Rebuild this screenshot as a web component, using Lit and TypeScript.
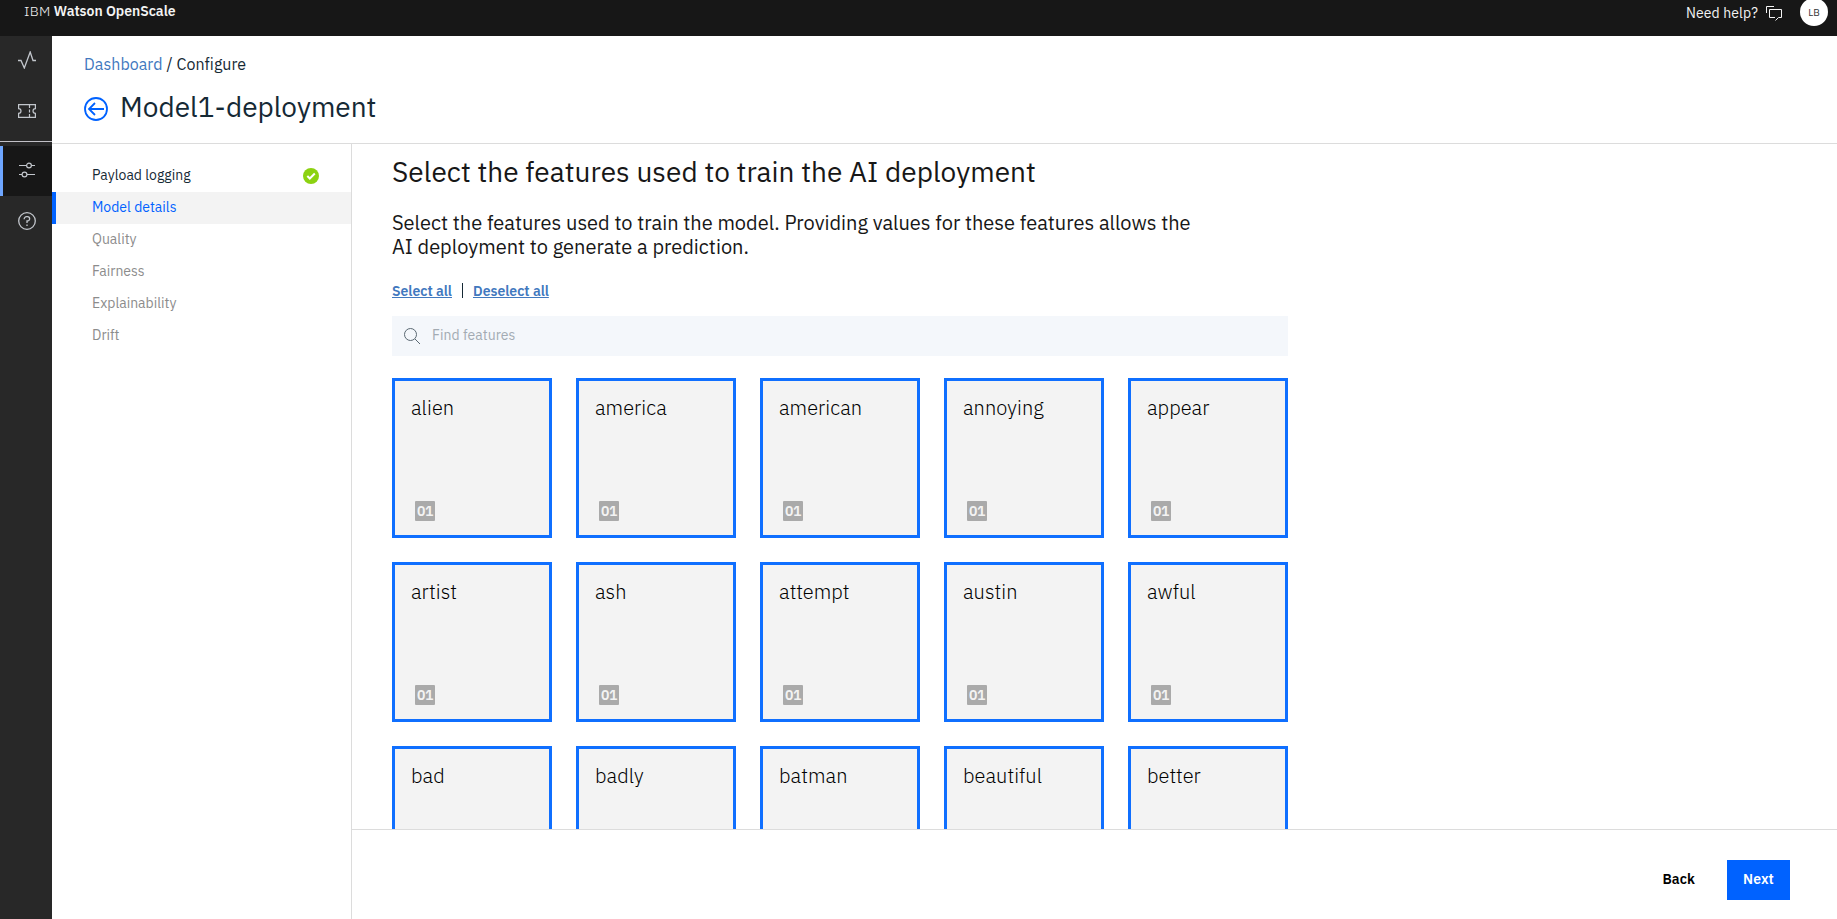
import { LitElement, html, css } from "lit";
import { customElement } from "lit/decorators.js";

const FEATURES = [
  { name: "alien", type: "01" }, { name: "america", type: "01" }, { name: "american", type: "01" }, { name: "annoying", type: "01" }, { name: "appear", type: "01" },
  { name: "artist", type: "01" }, { name: "ash", type: "01" }, { name: "attempt", type: "01" }, { name: "austin", type: "01" }, { name: "awful", type: "01" },
  { name: "bad" }, { name: "badly" }, { name: "batman" }, { name: "beautiful" }, { name: "better" },
];

@customElement("app-root")
export class AppRoot extends LitElement {
  static styles = css`
    :host { display: flex; flex-direction: column; height: 100vh; overflow: hidden; background: #fff; color: #171717; font-family: "IBM Plex Sans", Roboto, "Open Sans", sans-serif; }
    * { box-sizing: border-box; }
    svg { display: block; fill: none; }
    a { color: inherit; }
    h1, h2, p { margin: 0; font-weight: 400; }
    .top { height: 36px; flex: none; background: #171717; color: #f3f3f3; display: flex; justify-content: space-between; padding: 0 9px 0 24px; }
    .brand { font-size: 14px; line-height: 22px; white-space: pre; }
    .ibm { font-weight: 300; letter-spacing: 0.25px; }
    .product { font-weight: 600; letter-spacing: -0.03px; }
    .tools { display: flex; height: 26px; align-items: center; font-size: 14px; }
    .help { letter-spacing: 0.1px; margin-right: 8px; }
    .tools svg { margin-top: 1px; }
    .avatar { width: 28px; height: 28px; border-radius: 50%; background: #fff; color: #333; font-size: 10px; display: grid; place-items: center; margin: -2px 0 0 17px; }
    .body { flex: 1; min-height: 0; display: flex; }
    .rail { width: 52px; flex: none; background: #282828; color: #c2c6cc; display: flex; flex-direction: column; }
    .rail-item { height: 50px; margin-bottom: 1px; display: flex; align-items: center; padding: 0 0 2px 18px; }
    .rail-item.last { border-left: 3px solid #6ea6ff; padding-left: 15px; background: #171717; }
    .rail hr { width: 100%; height: 1px; flex: none; border: 0; background: #c2c1c7; margin: 3px 0 4px; }
    .page { flex: 1; min-width: 0; display: flex; flex-direction: column; }
    .head { height: 108px; flex: none; border-bottom: 1px solid #dcdcdc; padding: 17px 32px 0; color: #152935; }
    .crumbs { font-size: 16px; line-height: 22px; white-space: pre; letter-spacing: 0.06px; }
    .crumbs a { color: #4178be; text-decoration: none; }
    .title { display: flex; align-items: center; margin-top: 14px; gap: 12px; }
    .title svg { margin-top: 3px; }
    .title h1 { font-size: 28px; line-height: 36px; }
    .cols { flex: 1; min-height: 0; display: flex; }
    .steps { width: 300px; flex: none; border-right: 1px solid #dcdcdc; padding-top: 16px; font-size: 14px; }
    .step { height: 32px; display: flex; align-items: center; justify-content: space-between; padding: 0 32px 2px 40px; color: #8c8c8c; }
    .step svg { margin-top: 2px; }
    .step.done { color: #152935; }
    .step.now { color: #0062ff; background: #f3f3f3; border-left: 4px solid #0062ff; padding-left: 36px; }
    .work { flex: 1; min-width: 0; display: flex; flex-direction: column; }
    .scroll { flex: 1; min-height: 0; overflow: hidden; padding: 10px 0 0 40px; }
    .scroll h2 { font-size: 28px; line-height: 36px; letter-spacing: 0.04px; }
    .lead { font-size: 20px; line-height: 24px; margin-top: 21px; }
    .links { display: flex; font-size: 14px; line-height: 20px; margin-top: 22px; color: #4178be; font-weight: 600; }
    .links a { text-decoration: underline; text-underline-offset: 1px; }
    .sep { width: 1px; height: 15px; margin: 2px 10px 0; background: #152935; }
    .search { width: 896px; height: 40px; margin-top: 15px; background: #f4f7fb; display: flex; align-items: center; gap: 12px; padding-left: 12px; font-size: 14px; color: #a3abb3; }
    .search span { padding-bottom: 2px; letter-spacing: 0.05px; }
    .grid { display: grid; grid-template-columns: repeat(5, 160px); gap: 24px; margin-top: 22px; }
    .card { height: 160px; border: 3px solid #0f6fff; background: #f3f3f3; padding: 14px 16px; display: flex; flex-direction: column; justify-content: space-between; font-size: 20px; line-height: 26px; font-weight: 300; color: #000; letter-spacing: 0.06px; }
    .type { width: 20px; height: 20px; border-radius: 1px; background: #aaa; color: #f3f3f3; font-size: 14px; line-height: 20px; font-weight: 600; text-align: center; letter-spacing: -0.3px; margin-left: 4px; }
    .foot { height: 90px; flex: none; border-top: 1px solid #dcdcdc; display: flex; justify-content: flex-end; padding: 30px 47px 0 0; font-size: 14px; font-weight: 600; }
    .foot span { height: 40px; line-height: 38px; }
    .back { color: #000; margin-right: 32px; letter-spacing: 0.1px; }
    .next { width: 63px; text-align: center; background: #0062ff; color: #fff; letter-spacing: 0.1px; }
  `;

  render() {
    return html`
      <header class="top">
        <div class="brand"><span class="ibm">IBM</span> <span class="product">Watson OpenScale</span></div>
        <div class="tools"><span class="help">Need help?</span>
          <svg width="17" height="15" viewBox="0 0 17 15" stroke="#f3f3f3"><path d="M.5 7V.5H8M3.5 3.5h12v8h-3l-3 3M9 11.500H3.500v-8"/></svg>
          <span class="avatar">LB</span></div>
      </header>
      <div class="body">
        <nav class="rail">
          <div class="rail-item"><svg width="18" height="18" viewBox="0 0 18 18" stroke="currentColor" stroke-width="1.3"><path d="M0 9.500h3L6.300 17 12.200 1l2.800 8.500h3"/></svg></div>
          <div class="rail-item"><svg width="18" height="14" viewBox="0 0 18 14" stroke="currentColor" stroke-width="1.2"><path d="M.6.6h16.800v4a2.400 2.400 0 0 0 0 4.800v4H.6v-4a2.400 2.400 0 0 0 0-4.800z"/><path d="M11.500 1v3m0 1.500v3m0 1.500v3"/></svg></div>
          <hr>
          <div class="rail-item last"><svg width="18" height="18" viewBox="0 0 18 18" stroke="currentColor" stroke-width="1.2"><path d="M1 4.500h7.500m5 0H17M1 13.500h3m5 0h8"/><circle cx="11" cy="4.500" r="2.400"/><circle cx="6.500" cy="13.500" r="2.400"/></svg></div>
          <div class="rail-item"><svg width="18" height="18" viewBox="0 0 18 18" stroke="currentColor" stroke-width="1.3"><circle cx="9" cy="9" r="8.300"/><path d="M6.200 7.300V7a2.300 2.300 0 0 1 2.300-2.300h1a2.150 2.150 0 0 1 0 4.300H9v2M9 12.400v1.500"/></svg></div>
        </nav>
        <main class="page">
          <div class="head">
            <div class="crumbs"><a>Dashboard</a> / <span>Configure</span></div>
            <div class="title"><svg width="24" height="24" viewBox="0 0 24 24" stroke="#0062ff" stroke-width="1.8"><circle cx="12" cy="12" r="11"/><path d="M20 12H5.500M11 6l-6 6 6 6"/></svg><h1>Model1-deployment</h1></div>
          </div>
          <div class="cols">
            <aside class="steps">
              <div class="step done"><span>Payload logging</span><svg width="16" height="16" viewBox="0 0 16 16"><circle cx="8" cy="8" r="8" fill="#8cd211"/><path d="M4.300 8l2.500 2.500 5-5" stroke="#fff" stroke-width="2"/></svg></div>
              <div class="step now"><span>Model details</span></div>
              ${["Quality", "Fairness", "Explainability", "Drift"].map((s) => html`<div class="step"><span>${s}</span></div>`)}
            </aside>
            <section class="work">
              <div class="scroll">
                <h2>Select the features used to train the AI deployment</h2>
                <p class="lead">Select the features used to train the model. Providing values for these features allows the<br>AI deployment to generate a prediction.</p>
                <div class="links"><a>Select all</a><span class="sep"></span><a>Deselect all</a></div>
                <div class="search"><svg width="16" height="16" viewBox="0 0 16 16" stroke="#5a6872"><circle cx="6.500" cy="6.500" r="6"/><path d="M11 11l5 5"/></svg><span>Find features</span></div>
                <div class="grid">${FEATURES.map((f) => html`<div class="card"><span>${f.name}</span>${f.type ? html`<span class="type">${f.type}</span>` : null}</div>`)}</div>
              </div>
              <footer class="foot"><span class="back">Back</span><span class="next">Next</span></footer>
            </section>
          </div>
        </main>
      </div>`;
  }
}
